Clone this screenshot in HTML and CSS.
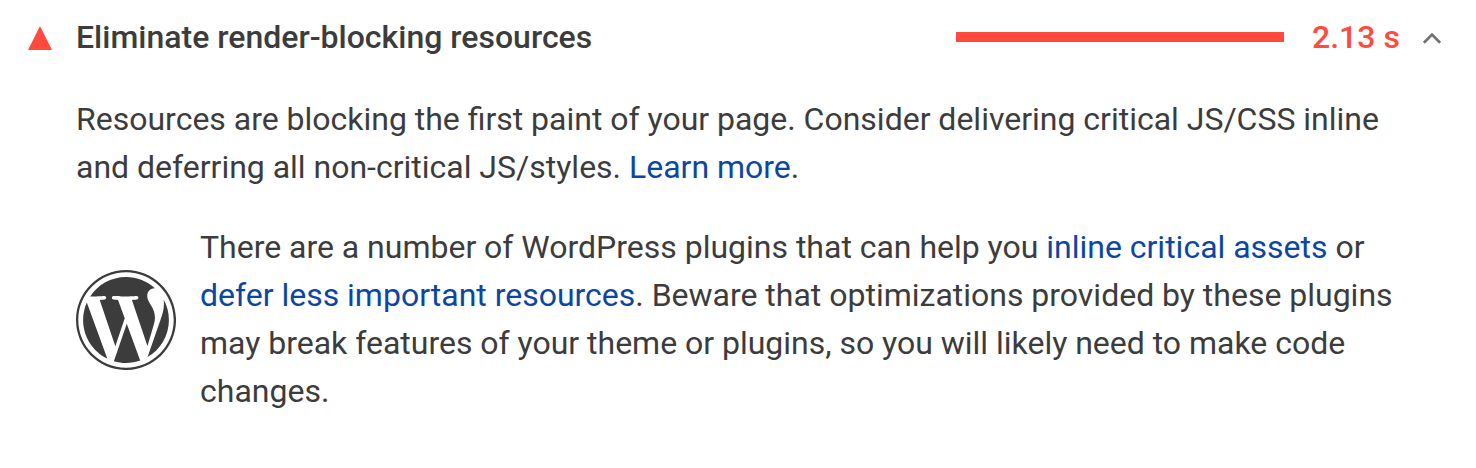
FILE: index.html
```html
<!DOCTYPE html>
<html lang="en">
<head>
<meta charset="utf-8">
<title>Eliminate render-blocking resources</title>
<link rel="stylesheet" href="styles.css">
</head>
<body>
<article class="audit">
  <header class="audit-header">
    <svg class="fail-icon" viewBox="0 0 24 24"><path d="M12 0L24 24H0Z"/></svg>
    <h1 class="title">Eliminate render-blocking resources</h1>
    <div class="bar"></div>
    <span class="savings">2.13 s</span>
    <svg class="chevron" viewBox="0 0 20 12"><path d="M1.900 10.700L10 2.600l8.100 8.100"/></svg>
  </header>
  <p class="description">Resources are blocking the first paint of your page. Consider delivering critical JS/CSS inline<br>and deferring all non-critical JS/styles. <a href="#">Learn more</a>.</p>
  <section class="stack">
    <svg class="wordpress" viewBox="0 0 122.5 122.5">
      <path d="M8.708 61.26c0 20.802 12.089 38.779 29.619 47.298L13.258 39.872c-2.916 6.536-4.55 13.769-4.55 21.388zM96.74 58.608c0-6.495-2.333-10.993-4.334-14.494-2.664-4.329-5.161-7.995-5.161-12.324 0-4.831 3.664-9.328 8.825-9.328.233 0 .454.029.681.042-9.35-8.566-21.807-13.796-35.489-13.796-18.36 0-34.513 9.42-43.91 23.688 1.233.037 2.395.063 3.382.063 5.497 0 14.006-.667 14.006-.667 2.833-.167 3.167 3.994.337 4.329 0 0-2.847.335-6.015.501L48.2 93.547l11.501-34.493-8.188-22.434c-2.830-.166-5.511-.501-5.511-.501-2.832-.166-2.500-4.496.332-4.329 0 0 8.679.667 13.843.667 5.496 0 14.006-.667 14.006-.667 2.835-.167 3.168 3.994.337 4.329 0 0-2.853.335-6.015.501l18.992 56.494 5.242-17.517c2.272-7.269 4.001-12.490 4.001-16.989zM62.184 65.857l-15.768 45.819c4.708 1.384 9.687 2.141 14.846 2.141 6.120 0 11.989-1.058 17.452-2.979-.141-.225-.269-.464-.374-.724zM107.376 36.046c.226 1.674.354 3.471.354 5.404 0 5.333-.996 11.328-3.996 18.824l-16.053 46.413c15.624-9.111 26.133-26.038 26.133-45.426 0-9.137-2.333-17.729-6.438-25.215z"/>
      <path d="M61.262 0C27.483 0 0 27.481 0 61.260c0 33.783 27.483 61.263 61.262 61.263 33.778 0 61.265-27.480 61.265-61.263C122.526 27.481 95.040 0 61.262 0zM61.262 119.715c-32.230 0-58.453-26.223-58.453-58.455 0-32.230 26.222-58.451 58.453-58.451 32.229 0 58.450 26.221 58.450 58.451 0 32.232-26.221 58.455-58.450 58.455z"/>
    </svg>
    <p class="advice">There are a number of WordPress plugins that can help you <a href="#">inline critical assets</a> or<br><a href="#">defer less important resources</a>. Beware that optimizations provided by these plugins<br>may break features of your theme or plugins, so you will likely need to make code<br>changes.</p>
  </section>
</article>
</body>
</html>
```
FILE: styles.css
```css
body {
  margin: 0;
  background: #fff;
  color: #3c3c3c;
  font: 400 32px/48px Roboto, sans-serif;
}
a { color: #0c46a3; text-decoration: none; }
p { margin: 0; white-space: nowrap; word-spacing: -0.08px; }
.audit { padding: 13px 34px 0 28px; }
.audit-header { display: flex; align-items: center; height: 48px; }
.fail-icon { width: 24px; height: 24px; margin: 2px 24px 0 0; fill: #ff4a3d; }
.title { margin: 0; font-size: 32px; font-weight: 500; }
.bar { width: 328px; height: 10px; margin-left: auto; background: #ff4a3d; }
.savings { width: 88px; margin: 0 22px 0 28px; color: #ff4a3d; font-weight: 500; white-space: nowrap; }
.chevron { width: 20px; height: 12px; margin-top: 2px; fill: none; stroke: #707070; stroke-width: 2.7; }
.description { margin: 34px 0 0 48px; }
.stack { display: flex; align-items: center; margin: 32px 0 0 48px; }
.wordpress { flex: none; width: 100px; height: 100px; margin: 2px 24px 0 0; fill: #3c3c3c; }
```
